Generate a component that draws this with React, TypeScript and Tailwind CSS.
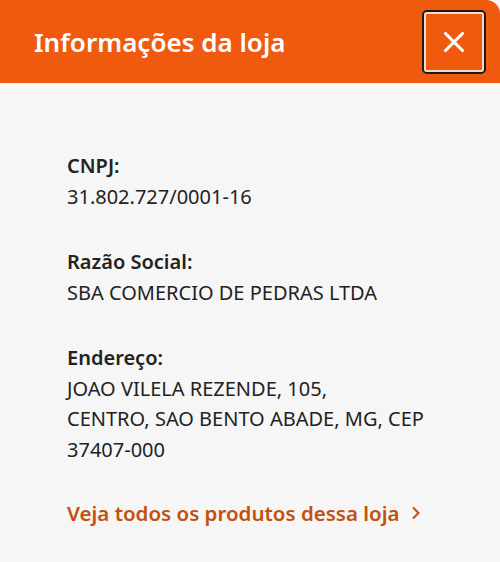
import { X, ChevronRight } from "lucide-react";

interface InfoBlockProps {
  label: string;
  lines: string[];
}

function InfoBlock({ label, lines }: InfoBlockProps): JSX.Element {
  return (
    <div className="flex flex-col">
      <span className="font-semibold">{label}</span>
      {lines.map((line) => (
        <span key={line}>{line}</span>
      ))}
    </div>
  );
}

export default function App(): JSX.Element {
  return (
    <div
      className="w-[500px] h-[562px] flex flex-col bg-[#f6f6f6] overflow-hidden"
      style={{ fontFamily: '"Noto Sans", "Open Sans", sans-serif' }}
    >
      <header className="h-[83px] shrink-0 flex items-center justify-between bg-[#f05a0f] rounded-tr-[14px] pl-[34px] pr-[14px]">
        <h1 className="text-white text-[26px] font-semibold leading-none">Informações da loja</h1>
        <button className="w-[64px] h-[64px] flex items-center justify-center rounded-[5px] border-2 border-[#1a1a1a] outline outline-2 -outline-offset-4 outline-[#f2d9cc]">
          <X className="w-[34px] h-[34px] text-white" strokeWidth={2.2} />
        </button>
      </header>
      <main className="flex flex-col gap-[35px] px-[67px] pt-[68px] text-[20px] leading-[30.5px] text-[#222222]">
        <InfoBlock label="CNPJ:" lines={["31.802.727/0001-16"]} />
        <InfoBlock label="Razão Social:" lines={["SBA COMERCIO DE PEDRAS LTDA"]} />
        <InfoBlock
          label="Endereço:"
          lines={["JOAO VILELA REZENDE, 105,", "CENTRO, SAO BENTO ABADE, MG, CEP", "37407-000"]}
        />
        <a className="flex items-center gap-[6px] font-semibold text-[20.5px] text-[#c4500e] -mt-[2px]">
          Veja todos os produtos dessa loja
          <ChevronRight className="w-[20px] h-[20px]" strokeWidth={2.5} />
        </a>
      </main>
    </div>
  );
}
